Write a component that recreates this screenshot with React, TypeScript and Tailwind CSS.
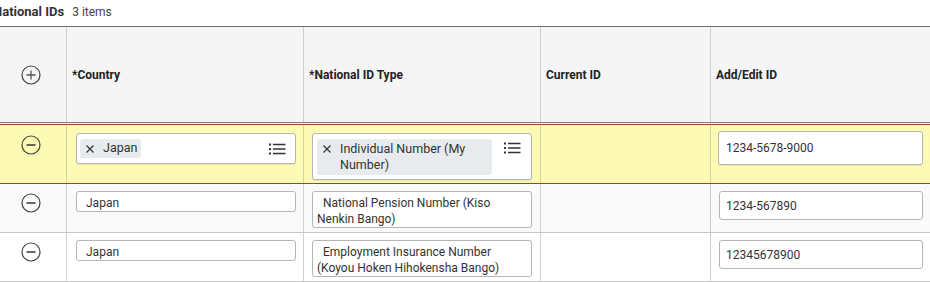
import React from 'react'

const font = "font-['Roboto','Liberation_Sans',sans-serif]"

function PlusCircle() {
  return (
    <svg width="20" height="20" viewBox="0 0 20 20" fill="none">
      <circle cx="10" cy="10" r="9" stroke="#444" strokeWidth="1.2" />
      <path d="M10 5.5v9M5.5 10h9" stroke="#555" strokeWidth="1.3" />
    </svg>
  )
}

function MinusCircle() {
  return (
    <svg width="20" height="20" viewBox="0 0 20 20" fill="none">
      <circle cx="10" cy="10" r="9" stroke="#444" strokeWidth="1.2" />
      <path d="M5.5 10h9" stroke="#555" strokeWidth="1.8" />
    </svg>
  )
}

function ListIcon() {
  return (
    <svg width="17" height="12" viewBox="0 0 17 12" fill="none">
      <rect x="0" y="0.5" width="2" height="2" fill="#333" />
      <rect x="0" y="5" width="2" height="2" fill="#333" />
      <rect x="0" y="9.5" width="2" height="2" fill="#333" />
      <path d="M4 1.5h12.5M4 6h12.5M4 10.5h12.5" stroke="#333" strokeWidth="1.4" />
    </svg>
  )
}

function XGlyph() {
  return (
    <svg width="8" height="8" viewBox="0 0 8 8" className="shrink-0">
      <path d="M0.5 0.5l7 7M7.5 0.5l-7 7" stroke="#333" strokeWidth="1.2" />
    </svg>
  )
}

interface RowProps {
  type: string
  id: string
}

const rows: RowProps[] = [
  { type: 'National Pension Number (Kiso Nenkin Bango)', id: '1234-567890' },
  { type: 'Employment Insurance Number (Koyou Hoken Hihokensha Bango)', id: '12345678900' },
]

export default function App() {
  return (
    <div className={`w-[930px] h-[282px] overflow-hidden bg-white text-[#333] ${font}`}>
      <div className="flex h-[26px] items-center gap-[8px] -ml-[7px] pb-[2px]">
        <span className="text-[13px] font-bold text-[#333]">National IDs</span>
        <span className="text-[12px] text-[#444]">3 items</span>
      </div>

      {/* header */}
      <div className="flex h-[97px] border-y border-t-[#6f6f6f] border-b-[#7d7d7d] bg-[#f5f5f5] text-[12px] font-bold text-[#222]">
        <div className="flex w-[66px] items-center justify-center pr-[4px] pt-[1px]">
          <PlusCircle />
        </div>
        <div className="flex w-[237px] items-center border-l border-[#d0d0d0] pl-[5px]">*Country</div>
        <div className="flex w-[237px] items-center border-l border-[#d0d0d0] pl-[5px]">*National ID Type</div>
        <div className="flex w-[170px] items-center border-l border-[#d0d0d0] pl-[5px]">Current ID</div>
        <div className="flex w-[220px] items-center border-l border-[#d0d0d0] pl-[5px]">Add/Edit ID</div>
      </div>
      <div className="h-[1px] bg-white" />

      {/* editing row */}
      <div className="flex h-[60px] border-y border-[#9a4a1a] bg-[#fdfab4] text-[12px]">
        <div className="flex w-[66px] justify-center pr-[4px] pt-[10px]">
          <MinusCircle />
        </div>
        <div className="w-[237px] border-l border-[#d6d2a0] pl-[9px] pt-[8px]">
          <div className="flex h-[31px] w-[220px] items-center justify-between rounded-[3px] border border-[#b5b5b5] bg-white pl-[3px] pr-[9px] shadow-[0_1px_1px_rgba(0,0,0,0.08)]">
            <div className="flex h-[19px] items-center gap-[9px] rounded-[3px] bg-[#e8ebee] pl-[6px] pr-[4px] text-[12.5px]">
              <XGlyph />
              <span>Japan</span>
            </div>
            <ListIcon />
          </div>
        </div>
        <div className="w-[237px] border-l border-[#d6d2a0] pl-[8px] pt-[8px]">
          <div className="flex h-[47px] w-[220px] items-start justify-between rounded-[3px] border border-[#b5b5b5] bg-white pl-[4px] pr-[10px] pt-[5px] shadow-[0_1px_1px_rgba(0,0,0,0.08)]">
            <div className="flex w-[175px] items-start gap-[9px] rounded-[3px] bg-[#e8ebee] py-[2px] pl-[6px] pr-[12px] text-[12.5px] leading-[16px]">
              <span className="mt-[4px]">
                <XGlyph />
              </span>
              <span>Individual Number (My Number)</span>
            </div>
            <div className="pt-[3px]">
              <ListIcon />
            </div>
          </div>
        </div>
        <div className="w-[170px] border-l border-[#d6d2a0]" />
        <div className="w-[220px] border-l border-[#d6d2a0] pl-[7px] pt-[6px]">
          <div className="flex h-[34px] w-[205px] items-center rounded-[3px] border border-[#b5b5b5] bg-white pl-[7px] text-[12px] shadow-[0_1px_1px_rgba(0,0,0,0.08)]">
            1234-5678-9000
          </div>
        </div>
      </div>

      {rows.map((r, i) => (
        <div
          key={r.id}
          className={`flex h-[49px] border-b border-[#c8c8c8] text-[12px] ${i === 0 ? 'bg-[#fafafa]' : 'bg-white'}`}
        >
          <div className="flex w-[66px] justify-center pr-[4px] pt-[9px]">
            <MinusCircle />
          </div>
          <div className="w-[237px] border-l border-[#d0d0d0] pl-[9px] pt-[7px]">
            <div className="flex h-[21px] w-[220px] items-center rounded-[3px] border border-[#b5b5b5] bg-white pl-[9px] pt-[2px]">
              Japan
            </div>
          </div>
          <div className="w-[237px] border-l border-[#d0d0d0] pl-[8px] pt-[7px]">
            <div className="h-[37px] w-[220px] rounded-[3px] border border-[#b5b5b5] bg-white pl-[4px] pr-[6px] pt-[3px] leading-[16px] [text-indent:6px]">
              {r.type}
            </div>
          </div>
          <div className="w-[170px] border-l border-[#d0d0d0]" />
          <div className="w-[220px] border-l border-[#d0d0d0] pl-[8px] pt-[7px]">
            <div className="flex h-[29px] w-[204px] items-center rounded-[3px] border border-[#b5b5b5] bg-white pl-[6px]">
              {r.id}
            </div>
          </div>
        </div>
      ))}
    </div>
  )
}
